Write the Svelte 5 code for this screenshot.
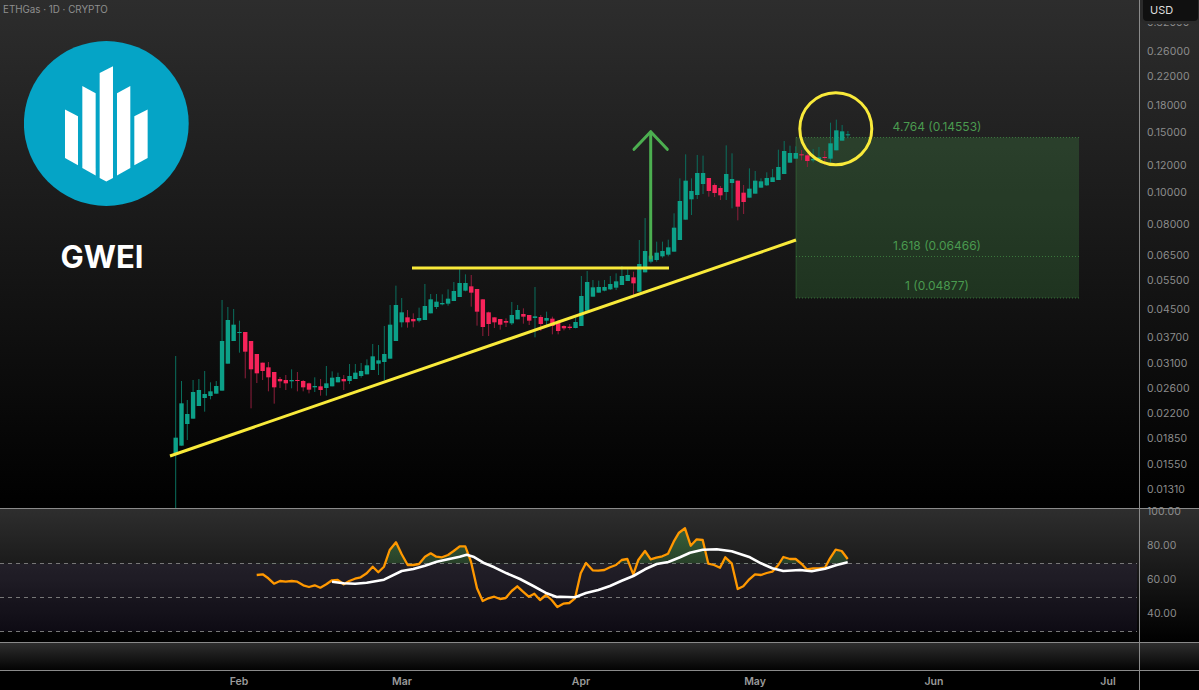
<script lang="ts">
  // candle rows are [wickHigh, bodyTop, bodyBottom, wickLow, down?], read off 3x crops,
  // so y = base + value / 3
  const segments = [
    { base: 280, rows: [
      [228,473,520,690],[303,370,497,497],[360,402,432,480],[300,336,416,416],[297,330,378,378],
      [273,342,354,395],[307,334,348,358],[303,318,341,341],[60,183,332,332],[81,120,251,251],
      [87,134,183,183],[122,156,159,218],[156,156,215,295,1],[183,183,268,385,1],[222,222,280,309,1],
      [248,248,273,300,1],[246,262,292,334,1],[276,276,322,371,1],[291,297,304,324,1],[285,300,310,330,1],
      [268,300,304,325],[276,300,302,334,1],[300,303,322,334,1],[308,310,329,340,1],[292,318,322,336],
      [297,319,330,347,1],[258,310,324,347],[274,293,319,319],[278,291,307,307],[285,297,304,330,1],
      [252,288,303,312],[252,278,297,297],[249,273,288,293],[238,256,283,283],[192,229,270,270],
      [195,241,251,285],[138,222,246,300],[75,134,236,236],[17,75,183,183]
    ] },
    { base: 240, rows: [
      [174,217,247,262],[210,232,247,263,1],[220,237,244,262,1],[203,234,242,247],[132,198,240,240],
      [162,178,220,220],[162,185,201,207],[163,189,193,196],[148,176,191,197],[126,153,183,183],
      [88,129,171,171],[103,129,152,154],[105,139,158,200,1],[147,147,215,257,1],[177,178,261,288,1],
      [215,217,252,288,1],[232,232,247,264,1],[237,237,254,269,1],[235,243,248,261,1],[186,225,250,255],
      [195,210,238,238],[205,222,230,251,1],[225,225,242,255,1],[141,229,234,292],[225,231,252,273,1],
      [215,234,242,258],[230,236,258,283,1],[240,246,273,283,1],[256,258,265,271,1],[252,260,264,269,1],
      [232,246,264,265],[108,168,258,258],[93,126,212,212],[120,142,170,170],[122,141,158,158],
      [120,141,152,154],[108,132,148,150],[100,124,143,150],[78,108,135,135],[88,105,123,123],
      [95,112,130,165,1],[0,72,155,155],[-66,33,97,97]
    ] },
    { base: 85, rows: [
      [495,512,530,535],[470,503,525,530],[470,498,514,518],[464,487,509,514],[385,428,500,500],
      [280,348,465,465],[208,287,404,404],[280,318,343,390],[210,264,330,342],[212,264,297,327],
      [279,279,318,335,1],[295,300,324,336,1],[303,309,331,345,1],[181,267,321,345],[205,282,294,370],
      [287,287,365,406,1],[300,323,351,387,1],[250,311,338,338],[258,287,326,326],[280,289,308,308],
      [262,279,301,303],[252,277,291,291],[194,246,285,285],[168,198,267,267],[182,204,233,233],
      [184,204,221,221],[195,208,211,226,1],[205,211,228,246,1],[192,222,226,232],[186,217,222,232],
      [198,216,218,240,1],[113,175,221,232],[104,136,196,196],[120,139,167,167],[138,148,150,160]
    ] }
  ];

  const candles = segments.flatMap((s) =>
    s.rows.map(([hi, top, bot, lo, down]) => ({
      hi: s.base + hi / 3,
      top: s.base + top / 3,
      bot: s.base + bot / 3,
      lo: s.base + lo / 3,
      down: !!down
    }))
  ).map((c, i) => ({ ...c, x: 175.7 + i * 5.795 }));

  const priceLabels = [
    ['0.32000', 23], ['0.26000', 52], ['0.22000', 77], ['0.18000', 106], ['0.15000', 133],
    ['0.12000', 165.5], ['0.10000', 192.5], ['0.08000', 225], ['0.06500', 255.5], ['0.05500', 281],
    ['0.04500', 310], ['0.03700', 338], ['0.03100', 364], ['0.02600', 389], ['0.02200', 414],
    ['0.01850', 439], ['0.01550', 465], ['0.01310', 490]
  ];
  const rsiLabels = [['100.00', 3], ['80.00', 36.5], ['60.00', 71], ['40.00', 105]];
  const months = [['Feb', 239], ['Mar', 402], ['Apr', 581], ['May', 755], ['Jun', 934], ['Jul', 1108]];

  const fibs = [
    { y: 137.5, labelY: 127, text: '4.764 (0.14553)', x: 937 },
    { y: 256.5, labelY: 246, text: '1.618 (0.06466)', x: 937 },
    { y: 298, labelY: 286, text: '1 (0.04877)', x: 937 }
  ];

  // rsi pane starts at y=509, crops started at (240,505) and (550,505)
  const toPane = (x0: number) => ([x, y]: number[]) => [x0 + x / 3, y / 3 - 4];
  const line = (pts: number[][]) => pts.map((p) => `${p[0].toFixed(1)},${p[1].toFixed(1)}`).join(' ');

  const rsi = [
    ...[[50,210],[68,208],[85,220],[102,236],[120,228],[137,230],[155,228],[172,230],[190,241],[207,246],
      [224,241],[241,248],[259,238],[276,226],[293,225],[311,238],[328,228],[345,221],[362,217],[380,205],
      [398,185],[415,202],[432,185],[449,135],[468,112],[485,148],[503,180],[520,180],[537,177],[555,155],
      [572,145],[589,155],[606,157],[624,150],[641,138],[659,124],[676,124],[693,170],[711,250],[728,288],
      [745,280],[763,275],[780,282],[797,279],[815,258],[832,244],[849,260],[866,275],[883,266],[900,285],
      [918,270],[935,285]].map(toPane(240)),
    ...[[22,306],[40,296],[58,294],[75,280],[92,205],[108,174],[128,196],[145,197],[163,195],[180,187],
      [198,180],[215,165],[232,162],[250,208],[265,165],[285,138],[302,163],[319,158],[337,154],[354,146],
      [371,110],[387,83],[405,70],[422,122],[440,103],[458,105],[475,176],[492,180],[510,188],[526,157],
      [545,175],[563,252],[580,244],[598,223],[615,208],[633,210],[650,204],[667,200],[685,180],[700,156],
      [720,162],[737,162],[755,177],[770,193],[790,190],[807,190],[825,188],[840,160],[857,134],[875,138],
      [893,162]].map(toPane(550))
  ];
  const rsiMa = [
    ...[[276,230],[311,235],[345,236],[380,233],[432,224],[485,198],[520,192],[555,182],[590,170],[624,163],
      [659,155],[680,149],[700,155],[730,173],[763,187],[800,205],[840,222],[880,243],[920,265],[950,276]].map(toPane(240)),
    ...[[30,275],[75,277],[108,264],[145,255],[180,243],[215,227],[250,213],[285,193],[320,177],[355,171],
      [390,157],[420,143],[458,134],[500,133],[545,139],[600,157],[633,175],[667,190],[700,198],[750,195],
      [785,199],[825,191],[860,180],[893,172]].map(toPane(550))
  ];
  const rsiArea = `${line(rsi)} ${rsi[rsi.length - 1][0]},54.5 ${rsi[0][0]},54.5`;
</script>

<div class="screen">
  <div class="pane main">
    <div class="plot">
      <svg width="1139" height="508" viewBox="0 0 1139 508">
        <rect class="fib-fill" x="796" y="137.5" width="283" height="160.5" />
        <line class="fib-edge" x1="796" y1="137.5" x2="796" y2="298" />
        {#each fibs as f}
          <line class="fib-line" x1="796" y1={f.y} x2="1079" y2={f.y} />
          <text class="fib-text" x={f.x} y={f.labelY} dy="4">{f.text}</text>
        {/each}

        {#each candles as c}
          <g class:down={c.down} class="candle">
            <line class="wick" x1={c.x} y1={c.hi} x2={c.x} y2={c.lo} />
            <rect class="body" x={c.x - 2.2} y={c.top} width="4.4" height={Math.max(c.bot - c.top, 1)} />
          </g>
        {/each}

        <line class="yellow" x1="170" y1="456" x2="796" y2="240" />
        <line class="yellow" x1="412" y1="268" x2="669" y2="268" />
        <circle class="yellow" cx="835.8" cy="128.7" r="36" />
        <polyline class="arrow" points="634,149.3 650.7,131.7 667.3,149.3" />
        <line class="arrow" x1="650.7" y1="132" x2="650.7" y2="258" />
      </svg>

      <span class="symbol">ETHGas · 1D · CRYPTO</span>
      <div class="brand">
        <svg class="logo" width="165" height="165" viewBox="24 40.7 165 165">
          <circle cx="106.3" cy="123.2" r="82.4" fill="#05a4c6" />
          <g fill="#fff" transform="scale(0.3333)">
            <polygon points="195,328 234,348 234,495 195,473" />
            <polygon points="247,257 287,279 287,526 247,503" />
            <polygon points="299,218 339,198 339,533 319,544 299,533" />
            <polygon points="351,279 391,257 391,503 351,526" />
            <polygon points="403,348 443,328 443,473 403,495" />
          </g>
        </svg>
        <span class="brand-name">GWEI</span>
      </div>
    </div>
    <div class="axis">
      {#each priceLabels as [label, y]}
        <span class="tick" style="top: {y}px">{label}</span>
      {/each}
      <div class="currency">USD</div>
    </div>
  </div>

  <div class="pane rsi">
    <div class="plot">
      <svg width="1139" height="133" viewBox="0 0 1139 133">
        <defs>
          <clipPath id="overbought"><rect x="0" y="0" width="1139" height="54.5" /></clipPath>
          <linearGradient id="overbought-fill" x1="0" y1="0" x2="0" y2="1">
            <stop offset="0" stop-color="#4caf50" stop-opacity="0.42" />
            <stop offset="1" stop-color="#4caf50" stop-opacity="0.04" />
          </linearGradient>
        </defs>
        <rect class="band" x="0" y="54.5" width="1137" height="68" />
        <line class="level" x1="0" y1="54.5" x2="1137" y2="54.5" />
        <line class="level" x1="0" y1="88.5" x2="1137" y2="88.5" />
        <line class="level" x1="0" y1="122.5" x2="1137" y2="122.5" />
        <polygon points={rsiArea} fill="url(#overbought-fill)" clip-path="url(#overbought)" />
        <polyline class="rsi-line" points={line(rsi)} />
        <polyline class="rsi-ma" points={line(rsiMa)} />
      </svg>
    </div>
    <div class="axis">
      {#each rsiLabels as [label, y]}
        <span class="tick" style="top: {y}px">{label}</span>
      {/each}
    </div>
  </div>

  <div class="pane strip">
    <div class="plot"></div>
    <div class="axis"></div>
  </div>

  <div class="time">
    <div class="plot">
      {#each months as [label, x]}
        <span class="month" style="left: {x}px">{label}</span>
      {/each}
    </div>
    <div class="axis"></div>
  </div>
</div>

<style>
  :global(body) {
    margin: 0;
    background: #000;
  }

  .screen {
    display: flex;
    flex-direction: column;
    width: 1199px;
    height: 690px;
    overflow: hidden;
    font-family: Inter, "Liberation Sans", sans-serif;
    background: #000;
  }

  .pane {
    display: flex;
    border-bottom: 1px solid #8a8a8a;
  }

  .main {
    height: 508px;
    background: linear-gradient(#2d2d2d, #000);
  }

  .rsi {
    height: 133px;
    background: linear-gradient(#2e2e2e, #000);
  }

  .strip {
    height: 27px;
    background: linear-gradient(#2e2e2e, #030303);
  }

  .plot {
    position: relative;
    width: 1139px;
    flex-shrink: 0;
  }

  .plot svg {
    display: block;
  }

  .axis {
    position: relative;
    flex: 1;
    border-left: 1px solid #8a8a8a;
  }

  .tick {
    position: absolute;
    left: 7px;
    transform: translateY(-50%);
    font-size: 10.5px;
    letter-spacing: 0.1px;
    color: #8c8c8c;
    line-height: 1;
  }

  .currency {
    position: absolute;
    top: 0;
    left: 3px;
    width: 55px;
    height: 21px;
    box-sizing: border-box;
    padding-left: 7px;
    line-height: 20px;
    font-size: 11px;
    color: #ddd;
    background: #101010;
    border-radius: 0 0 4px 4px;
    box-shadow: 0 0 0 3px #2a2a2a;
  }

  .symbol {
    position: absolute;
    top: 4px;
    left: 3px;
    font-size: 9.8px;
    line-height: 12px;
    color: #8f8f8f;
  }

  .brand {
    position: absolute;
    top: 40.7px;
    left: 24px;
    display: flex;
    flex-direction: column;
  }

  .logo {
    display: block;
  }

  .brand-name {
    margin-top: 33px;
    width: 156px;
    text-align: center;
    font-size: 31px;
    line-height: 36px;
    font-weight: 700;
    color: #fff;
  }

  .candle .wick {
    stroke: #0b6f5e;
    stroke-width: 1;
  }

  .candle .body {
    fill: #0ca088;
  }

  .candle.down .wick {
    stroke: #8f1f3c;
  }

  .candle.down .body {
    fill: #f7235a;
  }

  .yellow {
    fill: none;
    stroke: #f9ea3a;
    stroke-width: 3;
  }

  .arrow {
    fill: none;
    stroke: #4caf50;
    stroke-width: 3;
    stroke-linecap: round;
    stroke-linejoin: round;
  }

  .fib-fill {
    fill: #4caf50;
    fill-opacity: 0.22;
  }

  .fib-edge {
    stroke: #4caf50;
    stroke-opacity: 0.3;
  }

  .fib-line {
    stroke: #4caf50;
    stroke-opacity: 0.55;
    stroke-dasharray: 1 2;
  }

  .fib-text {
    fill: #4a9a4f;
    font-size: 12px;
    text-anchor: middle;
  }

  .band {
    fill: #7e57c2;
    fill-opacity: 0.09;
  }

  .level {
    stroke: #777;
    stroke-width: 1;
    stroke-dasharray: 4 4;
  }

  .rsi-line {
    fill: none;
    stroke: #ff9800;
    stroke-width: 2.3;
    stroke-linejoin: round;
  }

  .rsi-ma {
    fill: none;
    stroke: #fff;
    stroke-width: 2.6;
    stroke-linejoin: round;
  }

  .time {
    display: flex;
    flex: 1;
  }

  .month {
    position: absolute;
    top: 11px;
    transform: translate(-50%, -50%);
    font-size: 10.5px;
    font-weight: 600;
    line-height: 1;
    color: #9a9a9a;
  }
</style>
